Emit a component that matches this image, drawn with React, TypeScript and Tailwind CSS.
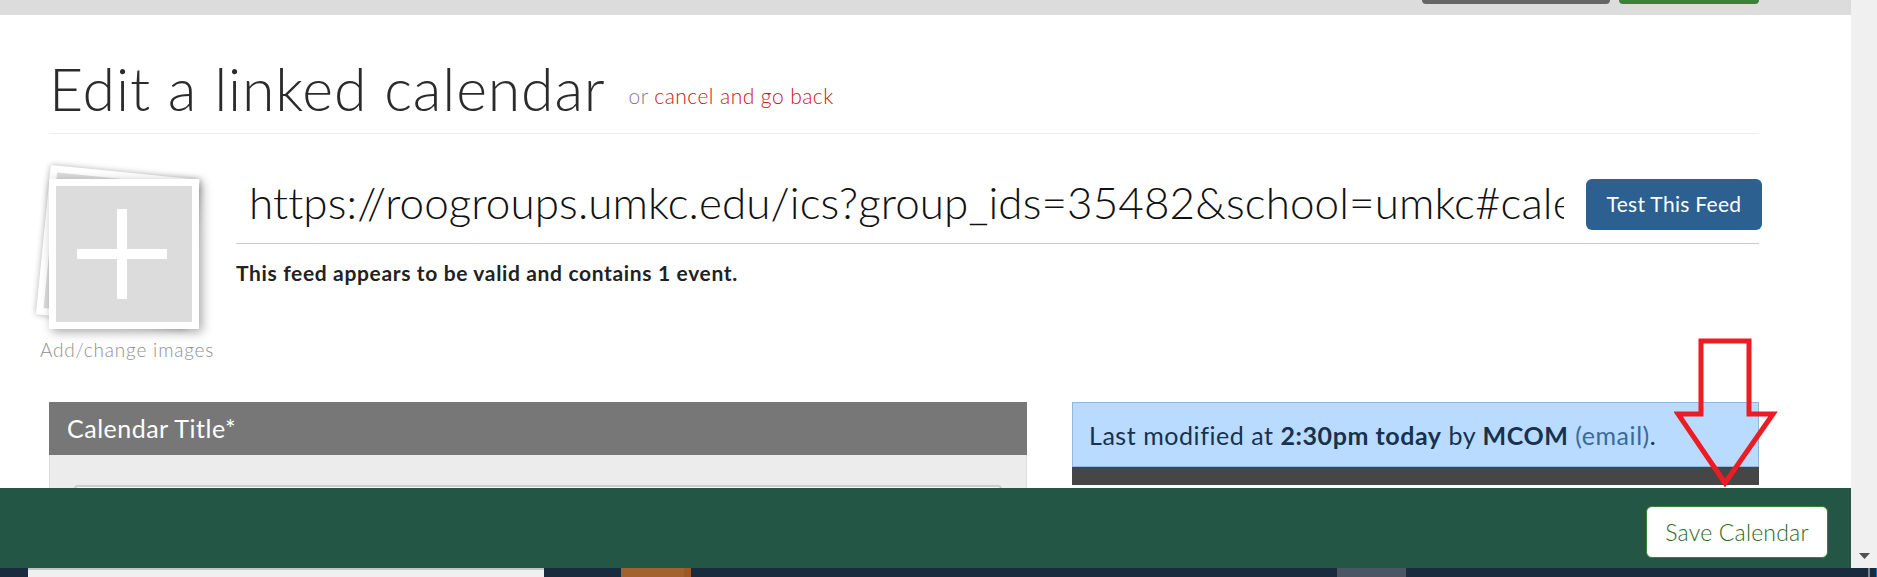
const FEED_URL = "https://roogroups.umkc.edu/ics?group_ids=35482&school=umkc#calendar";

function ImagePicker() {
  return (
    <div className="w-[150px] shrink-0">
      <div className="relative h-[150px] w-[150px]">
        <div className="absolute left-[-6px] top-[-7px] h-[150px] w-[150px] rotate-[5.7deg] border-[7px] border-white bg-[#dcdcdc] shadow-[0_0_6px_rgba(0,0,0,0.3)]" />
        <div className="relative flex h-full w-full items-center justify-center border-[7px] border-white bg-[#dcdcdc] shadow-[3px_3px_10px_rgba(0,0,0,0.35)]">
          <svg width="90" height="90" viewBox="0 0 90 90" className="mr-[4px] fill-white">
            <rect x="40" y="0" width="10" height="90" />
            <rect x="0" y="40" width="90" height="10" />
          </svg>
        </div>
      </div>
      <p className="-ml-[9px] mt-[9px] whitespace-nowrap text-[19px] font-light leading-6 tracking-[0.8px] text-[#8f8f8f]">Add/change images</p>
    </div>
  );
}

export default function App() {
  return (
    <div className="flex h-[577px] w-full flex-col overflow-hidden bg-white font-['Lato',sans-serif]">
      <div className="flex h-[568px] shrink-0">
        <div className="flex w-[1851px] flex-col">
          <div className="flex h-[15px] shrink-0 items-start justify-end gap-[9px] bg-[#dcdcdc] pr-[92px]">
            <div className="h-[4px] w-[188px] rounded-b bg-[#666666]" />
            <div className="h-[4px] w-[140px] rounded-b bg-[#3a8139]" />
          </div>

          <main className="relative h-[473px] shrink-0 overflow-hidden pl-[49px] pr-[92px]">
            <header className="flex h-[119px] items-start border-b border-[#eeeeee] pt-[40px]">
              <h1 className="text-[59px] font-light leading-[68px] tracking-[0.85px] text-[#2b2b2b]">Edit a linked calendar</h1>
              <span className="ml-[23px] mt-[27px] text-[21px] font-light leading-[28px] tracking-[0.45px] text-[#808080]">
                or <a className="text-[#d0121b]">cancel and go back</a>
              </span>
            </header>

            <section className="mt-[45px] flex h-[223px] gap-[37px]">
              <ImagePicker />
              <div className="min-w-0 flex-1">
                <div className="flex h-[65px] items-start border-b border-[#cccccc]">
                  <input
                    readOnly
                    value={FEED_URL}
                    className="-mt-[2px] h-[50px] min-w-0 flex-1 pl-[13px] text-[44px] font-light tracking-[0.1px] text-[#111111] outline-none"
                  />
                  <button className="-mr-[3px] ml-[22px] h-[51px] w-[176px] shrink-0 rounded-md bg-[#2b6090] pb-[2px] text-[21px] tracking-[0.3px] text-white">
                    Test This Feed
                  </button>
                </div>
                <p className="mt-[17px] text-[21px] font-bold leading-6 tracking-[0.65px] text-[#222222]">
                  This feed appears to be valid and contains 1 event.
                </p>
              </div>
            </section>

            <div className="flex items-start gap-[45px]">
              <div className="w-[978px] shrink-0 border-x border-[#dddddd] bg-[#ececec]">
                <h2 className="-mx-px flex h-[53px] items-center bg-[#777777] pl-[18px] text-[25px] tracking-[0.5px] text-white">Calendar Title*</h2>
                <div className="h-[100px] px-[24px] pt-[30px]">
                  <div className="h-[60px] rounded border-2 border-[#cccccc] bg-[#f4f4f4]" />
                </div>
              </div>
              <div className="flex-1">
                <div className="flex h-[65px] items-center border border-[#8fb8de] bg-[#b9dbff] pl-[16px] pt-[2px] text-[25px] font-normal tracking-[0.55px] text-[#16324f]">
                  <p>
                    Last modified at <b>2:30pm today</b> by <b>MCOM</b> <span className="text-[#3a6a9a]">(email)</span>.
                  </p>
                </div>
                <div className="h-[18px] bg-[#464646]" />
              </div>
            </div>

            <svg width="110" height="156" viewBox="0 0 110 156" className="absolute left-[1674px] top-[322px] fill-none stroke-[#ed1c24] stroke-[5]">
              <path d="M27 4 H75 V77 H99 L51 146 L4 77 H27 Z" strokeLinejoin="miter" />
            </svg>
          </main>

          <footer className="flex h-[80px] shrink-0 items-start justify-end bg-[#235645] pr-[23px] pt-[18px]">
            <button className="h-[52px] w-[182px] rounded-md border border-[#3a8139] bg-white text-[23px] font-light tracking-[0.2px] text-[#2a6a24]">
              Save Calendar
            </button>
          </footer>
        </div>

        <aside className="flex w-[26px] shrink-0 flex-col items-center justify-end bg-[#f0f0f0] pb-[9px]">
          <svg width="11" height="6" viewBox="0 0 11 6" className="fill-[#505050]">
            <path d="M0 0 H11 L5.5 6 Z" />
          </svg>
        </aside>
      </div>

      <div className="flex h-[9px] shrink-0 bg-[#1b2b3f]">
        <div className="ml-[28px] h-full w-[516px] border-t-2 border-[#c4c4c4] bg-[#f0f0f0]" />
        <div className="ml-[77px] h-full w-[70px] border-r-[7px] border-[#9a5a28] bg-[#a3622d]" />
        <div className="ml-[646px] h-full w-[69px] bg-[#4a5664]" />
        <div className="ml-[462px] h-full w-[2px] bg-[#7a8490]" />
        <div className="ml-[6px] h-full w-px bg-[#1a6fb5]" />
      </div>
    </div>
  );
}
